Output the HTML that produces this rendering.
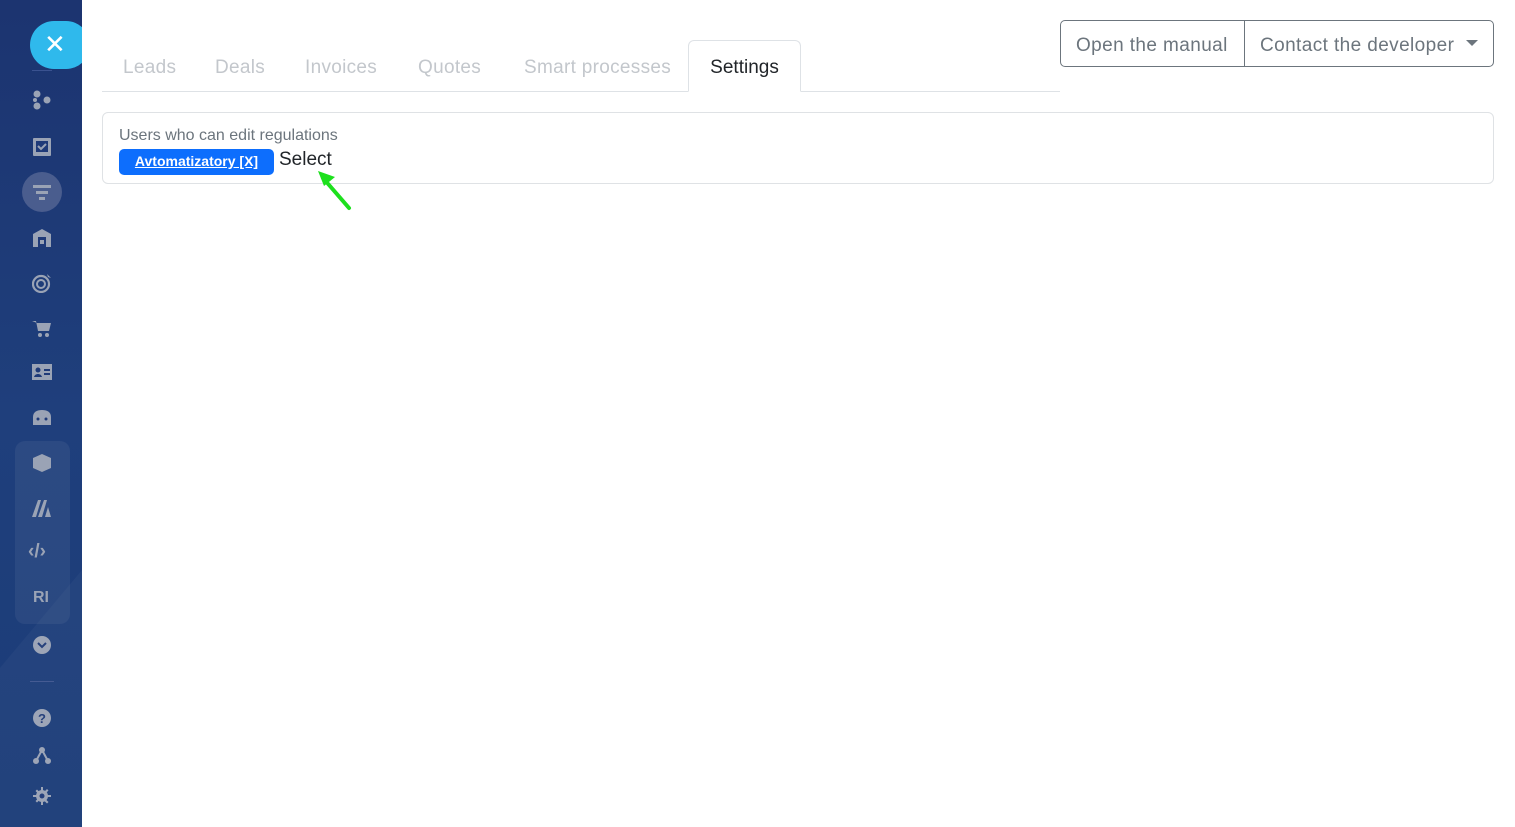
<!DOCTYPE html>
<html><head><meta charset="utf-8"><style>
*{box-sizing:border-box;margin:0;padding:0}
body{width:1515px;height:827px;overflow:hidden;background:#fff;font-family:"Liberation Sans","DejaVu Sans",sans-serif;position:relative}
.sb{position:absolute;left:0;top:0;width:82px;height:827px;background:linear-gradient(180deg,#1c3470 0%,#1f3f7c 50%,#1b3c78 100%);overflow:hidden}
.sb:after{content:"";position:absolute;left:82px;top:570px;width:200px;height:400px;background:rgba(255,255,255,0.03);transform:rotate(40deg);transform-origin:0 0}
.ic{position:absolute;left:32px;width:20px;height:20px;fill:#9aa3b5}
.x{position:absolute;left:30px;top:21px;width:60px;height:48px;border-radius:24px;background:#2fb9ec;color:#fff;font-size:26px;line-height:46px;padding-left:14px}
.tabs{position:absolute;left:102px;top:40px;width:958px;height:52px;border-bottom:1px solid #dee2e6}
.tab{position:absolute;top:17px;font-size:19px;color:#c3c7cc;letter-spacing:0.3px}
.act{position:absolute;left:586px;top:0;width:113px;height:52px;border:1px solid #dee2e6;border-bottom:1px solid #fff;border-radius:6px 6px 0 0;background:#fff;color:#212529;font-size:19px;text-align:center;padding-top:16px}
.btns{position:absolute;left:1060px;top:20px;width:434px;height:47px;border:1px solid #6c757d;border-radius:5px;color:#6c757d;font-size:19px;letter-spacing:0.4px}
.btns span{position:absolute;top:14px}
.panel{position:absolute;left:102px;top:112px;width:1392px;height:72px;border:1px solid #dfe2e5;border-radius:6px}
</style></head><body>
<div class="sb">
<div class="x">✕</div>
<div style="position:absolute;left:32px;top:70px;width:20px;height:1px;background:#3a5290"></div>
<svg class="ic" style="top:90px" viewBox="0 0 20 20"><circle cx="5" cy="4" r="3.5"/><circle cx="15" cy="10" r="3.5"/><circle cx="5" cy="16" r="3.5"/><circle cx="3" cy="10" r="2"/></svg>
<svg class="ic" style="top:137px" viewBox="0 0 20 20"><rect x="1" y="1" width="18" height="18" rx="1"/><rect x="4" y="4" width="12" height="11" fill="#1f3a78"/><path d="M6 9l3 3 5-5" stroke="#9aa3b5" stroke-width="2" fill="none"/></svg>
<div style="position:absolute;left:22px;top:172px;width:40px;height:40px;border-radius:50%;background:#4a5d8e"></div>
<svg class="ic" style="top:182px" viewBox="0 0 20 20"><rect x="1" y="3" width="18" height="3"/><rect x="4" y="9" width="12" height="3"/><rect x="7" y="15" width="6" height="3"/></svg>
<svg class="ic" style="top:228px" viewBox="0 0 20 20"><path d="M10 1L1 6v13h18V6z"/><rect x="6" y="9" width="8" height="10" fill="#1f3a78"/><rect x="8" y="12" width="4" height="4"/></svg>
<svg class="ic" style="top:273px" viewBox="0 0 20 20"><circle cx="9" cy="11" r="8" fill="none" stroke="#9aa3b5" stroke-width="2.2"/><circle cx="9" cy="11" r="4" fill="none" stroke="#9aa3b5" stroke-width="2"/><path d="M9 11L17 3M15 1l1 3 3 1"/></svg>
<svg class="ic" style="top:318px" viewBox="0 0 20 20"><path d="M0 3h4l2 10h11l2-8H5" /><circle cx="8" cy="17" r="2"/><circle cx="15" cy="17" r="2"/></svg>
<svg class="ic" style="top:362px" viewBox="0 0 20 20"><rect x="0" y="2" width="20" height="16"/><circle cx="6" cy="8" r="2.5" fill="#1f3a78"/><path d="M2 15c1-4 7-4 8 0z" fill="#1f3a78"/><rect x="12" y="7" width="6" height="2" fill="#1f3a78"/><rect x="12" y="11" width="6" height="2" fill="#1f3a78"/></svg>
<svg class="ic" style="top:407px" viewBox="0 0 20 20"><path d="M1 10c0-5 4-7 9-7s9 2 9 7v8H1z"/><circle cx="6" cy="12" r="1.5" fill="#1f3a78"/><circle cx="14" cy="12" r="1.5" fill="#1f3a78"/></svg>
<div style="position:absolute;left:15px;top:441px;width:55px;height:183px;border-radius:10px;background:rgba(255,255,255,0.06)"></div>
<svg class="ic" style="top:453px" viewBox="0 0 20 20"><path d="M10 1l9 4v10l-9 4-9-4V5z"/></svg>
<svg class="ic" style="top:498px" viewBox="0 0 20 20"><path d="M0 19L6 2h3L4 19zM6 19L12 2h3L10 19zM13 19l3-10 3 10z"/></svg>
<div style="position:absolute;left:28px;top:541px;color:#9aa3b5;font-weight:bold;font-size:19px">‹/›</div>
<div style="position:absolute;left:33px;top:589px;color:#9aa3b5;font-weight:bold;font-size:16px">RI</div>
<svg class="ic" style="top:635px" viewBox="0 0 20 20"><circle cx="10" cy="10" r="9"/><path d="M6 8l4 4 4-4" stroke="#1f3a78" stroke-width="2" fill="none"/></svg>
<div style="position:absolute;left:30px;top:681px;width:24px;height:1px;background:#3f5690"></div>
<svg class="ic" style="top:708px" viewBox="0 0 20 20"><circle cx="10" cy="10" r="9"/><text x="10" y="15" text-anchor="middle" font-size="13" font-weight="bold" fill="#1f3a78" font-family="Liberation Sans">?</text></svg>
<svg class="ic" style="top:746px" viewBox="0 0 20 20"><circle cx="10" cy="4" r="3"/><circle cx="4" cy="15" r="3"/><circle cx="16" cy="15" r="3"/><path d="M10 4L4 15M10 4l6 11" stroke="#9aa3b5" stroke-width="2"/></svg>
<svg class="ic" style="top:786px" viewBox="0 0 20 20"><circle cx="10" cy="10" r="6"/><path d="M9 1h2v4H9zM9 15h2v4H9zM1 9h4v2H1zM15 9h4v2h-4zM3.5 5l1.5-1.5 3 3-1.5 1.5zM12 14.5l1.5-1.5 3 3L15 17.5zM3.5 15l3-3 1.5 1.5-3 3zM12 6l3-3 1.5 1.5-3 3z"/><circle cx="10" cy="10" r="2.5" fill="#1f3a78"/></svg>
</div>
<div class="tabs">
<span class="tab" style="left:21px">Leads</span>
<span class="tab" style="left:113px">Deals</span>
<span class="tab" style="left:203px">Invoices</span>
<span class="tab" style="left:316px">Quotes</span>
<span class="tab" style="left:422px">Smart processes</span>
<div class="act">Settings</div>
</div>
<div class="btns"><span style="left:15px">Open the manual</span><div style="position:absolute;left:183px;top:0;width:1px;height:45px;background:#6c757d"></div><span style="left:199px">Contact the developer</span><div style="position:absolute;left:405px;top:19px;border-left:6px solid transparent;border-right:6px solid transparent;border-top:6px solid #6c757d"></div></div>
<div class="panel">
<div style="position:absolute;left:16px;top:14px;font-size:16px;color:#6c757d">Users who can edit regulations</div>
<div style="position:absolute;left:16px;top:36px;width:155px;height:26px;background:#0d6efd;border-radius:5px;color:#fff;font-weight:bold;font-size:14px;text-decoration:underline;text-align:center;line-height:25px">Avtomatizatory [X]</div>
<div style="position:absolute;left:176px;top:36px;font-size:19px;color:#212529">Select</div>
</div>
<svg style="position:absolute;left:312px;top:166px" width="44" height="48" viewBox="0 0 44 48"><path d="M37 42L11 12" stroke="#1de01d" stroke-width="4" stroke-linecap="round"/><path d="M6 5l17 6-11 9z" fill="#1de01d"/></svg>
</body></html>
